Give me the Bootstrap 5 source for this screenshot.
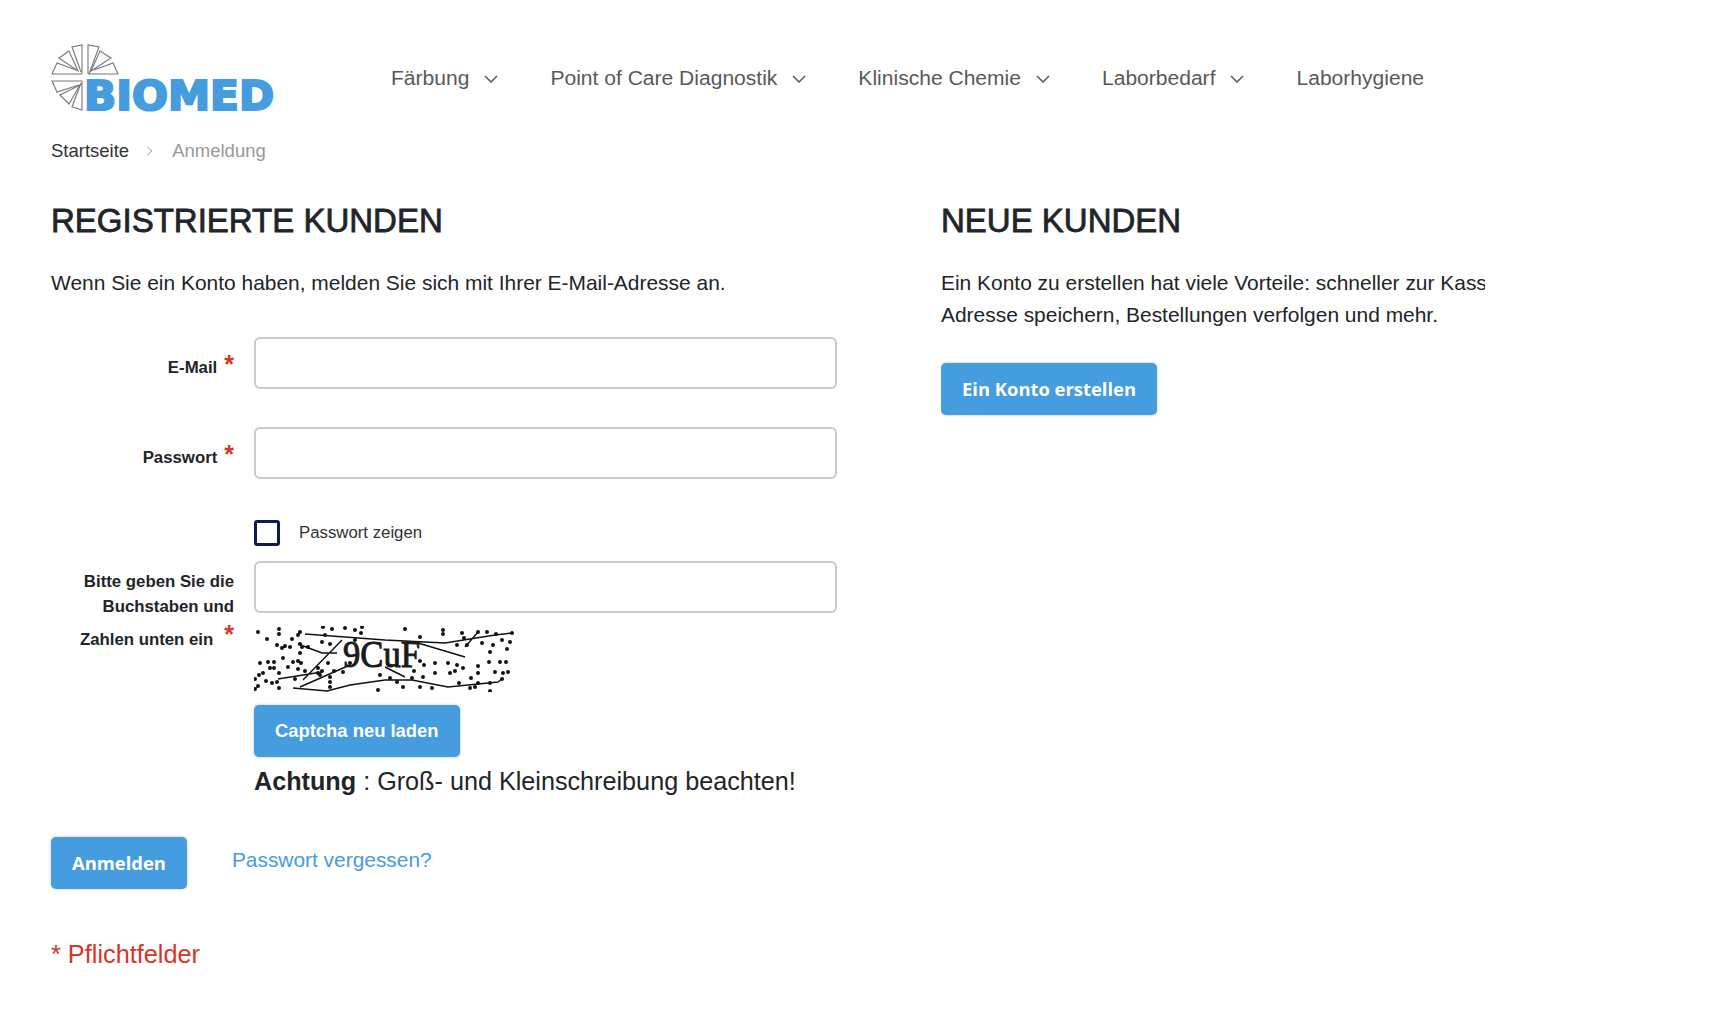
<!DOCTYPE html>
<html lang="de">
<head>
<meta charset="utf-8">
<title>Anmeldung</title>
<link href="https://cdn.jsdelivr.net/npm/bootstrap@5.3.0/dist/css/bootstrap.min.css" rel="stylesheet">
<style>
html,body{overflow:hidden;height:1014px}
body{font-family:"Liberation Sans",Arial,sans-serif;color:#212529;background:#fff}
.page-wrap{padding:44px 0 0 51px;width:1722px}
.logo-link{display:block;height:68px;width:226px;flex:none}
.logo-svg{display:block;width:226px;height:78px}
.main-nav{margin-left:114px;gap:52px;font-size:21.05px;color:#595959;height:68px;padding-top:0}
.main-nav a{color:#595959;text-decoration:none;display:flex;align-items:center;gap:15px}
.main-nav svg{width:14px;height:8px;display:block;margin-top:2px}
.crumbs{margin:0;padding:0;font-size:18.5px;line-height:24px;margin-top:27px;--bs-breadcrumb-item-padding-x:0}
.crumbs .breadcrumb-item a{color:#333;text-decoration:none}
.crumbs .breadcrumb-item+.breadcrumb-item::before{content:none}
.crumbs .breadcrumb-item.active{color:#999}
.crumb-sep{width:8px;height:10px;margin:0 18px 0 17px;align-self:center}
.cols{margin-top:38px}
.col-left{width:890px;flex:none}
.col-right{width:544px;flex:none;overflow:hidden}
.ttl{font-family:"Liberation Sans",Arial,sans-serif;font-size:33px;line-height:40px;font-weight:400;margin:0 0 26px;color:#212529;-webkit-text-stroke:.8px #212529}
.intro{font-size:20.95px;line-height:32px;margin:0 0 38px;white-space:nowrap}
.frow{display:flex;width:785px}
.flabel{width:183px;flex:none;text-align:right;font-weight:700;font-size:16.8px;line-height:25px;padding-top:17px;color:#212529}
.req{color:#d8352a;font-size:25px;font-weight:700;line-height:20px;margin-left:7px;position:relative;top:0}
.req-wide{margin-left:11px;top:-2px}
.fbody{margin-left:20px;width:583px;flex:none}
.fbody .form-control{height:52px;border:2px solid #c9c9c9;border-radius:6px}
.mb-gap{margin-bottom:38px}
.show-row{display:flex;align-items:center;margin:41px 0 15px;padding:0;min-height:0}
.show-row .form-check-input{float:none;margin:0;width:26px;height:26px;border:3px solid #0c1a5c;border-radius:3px}
.show-row .form-check-label{margin-left:19px;font-size:16.8px;color:#333}
.captcha-svg{display:block;width:262px;height:66px;margin-top:13px}
.btn-blue{background:#459cdf;border:0;color:#fff;font-weight:700;height:52px;border-radius:5px;box-shadow:0 0 3px rgba(0,0,0,.25);padding:0 21px;font-size:18.4px;display:inline-flex;align-items:center}
.btn-blue:hover{background:#3a8fd0;color:#fff}
.btn-open{font-family:"Open Sans",sans-serif}
.captcha-btn{margin-top:13px}
.note{font-size:25.2px;line-height:30px;margin-top:9px;white-space:nowrap}
.actions{margin-top:41px}
.link-forgot{color:#459cdf;font-size:20.9px;text-decoration:none;margin-left:45px;position:relative;top:-3px}
.must{color:#d8352a;font-size:25.3px;line-height:30px;margin-top:50px}
.intro-right{margin-bottom:32px}
.capt-txt{font-family:"Liberation Serif",serif;stroke:#1a1a1a;stroke-width:1}
</style>
</head>
<body>
<div class="page-wrap">
  <header class="d-flex align-items-center">
    <a href="#" class="logo-link" aria-label="BIOMED">
      <svg class="logo-svg" viewBox="0 0 226 78" xmlns="http://www.w3.org/2000/svg">
        <g fill="none" stroke="#777" stroke-width="1.1" stroke-linejoin="miter">
          <path d="M37 30V1L48 3 38 30H67L62 19 43 26"/>
          <path d="M49 7 60 14 40 27Z"/>
          <path d="M31 30V1L21 3 30 28"/>
          <path d="M18 7 8 14 27 27Z"/>
          <path d="M31 30H1L6 19 25 26"/>
          <path d="M31 37H1L6 48 28 41"/>
          <path d="M9 51 18 60 29 41Z"/>
          <path d="M31 37V66L21 63 30 39"/>
        </g>
        <text x="33" y="66" font-family="DejaVu Sans" font-weight="700" font-size="40.5" fill="#459cdf" stroke="#459cdf" stroke-width="2.2" textLength="190" lengthAdjust="spacingAndGlyphs">BIOMED</text>
      </svg>
    </a>
    <nav class="main-nav d-flex align-items-center">
      <a href="#">Färbung <svg viewBox="0 0 14 8"><path d="M1 1l6 6 6-6" fill="none" stroke="#595959" stroke-width="1.5"/></svg></a>
      <a href="#">Point of Care Diagnostik <svg viewBox="0 0 14 8"><path d="M1 1l6 6 6-6" fill="none" stroke="#595959" stroke-width="1.5"/></svg></a>
      <a href="#">Klinische Chemie <svg viewBox="0 0 14 8"><path d="M1 1l6 6 6-6" fill="none" stroke="#595959" stroke-width="1.5"/></svg></a>
      <a href="#">Laborbedarf <svg viewBox="0 0 14 8"><path d="M1 1l6 6 6-6" fill="none" stroke="#595959" stroke-width="1.5"/></svg></a>
      <a href="#">Laborhygiene</a>
    </nav>
  </header>

  <nav aria-label="breadcrumb">
    <ol class="breadcrumb crumbs">
      <li class="breadcrumb-item"><a href="#">Startseite</a></li>
      <svg class="crumb-sep" viewBox="0 0 8 10"><path d="M1.5 1l4.5 4-4.5 4" fill="none" stroke="#999" stroke-width="1"/></svg>
      <li class="breadcrumb-item active" aria-current="page">Anmeldung</li>
    </ol>
  </nav>

  <div class="d-flex cols">
    <section class="col-left">
      <h2 class="ttl">REGISTRIERTE KUNDEN</h2>
      <p class="intro">Wenn Sie ein Konto haben, melden Sie sich mit Ihrer E-Mail-Adresse an.</p>
      <form>
        <div class="frow mb-gap">
          <label class="flabel" for="em">E-Mail<span class="req">*</span></label>
          <div class="fbody"><input id="em" type="email" class="form-control"></div>
        </div>
        <div class="frow">
          <label class="flabel" for="pw">Passwort<span class="req">*</span></label>
          <div class="fbody"><input id="pw" type="password" class="form-control"></div>
        </div>
        <div class="frow">
          <div class="flabel"></div>
          <div class="fbody">
            <div class="form-check show-row">
              <input class="form-check-input" type="checkbox" id="sp">
              <label class="form-check-label" for="sp">Passwort zeigen</label>
            </div>
          </div>
        </div>
        <div class="frow">
          <label class="flabel pt-2" for="cp">Bitte geben Sie die<br>Buchstaben und<br><span class="d-inline-block capt-gap mt-2">Zahlen unten ein</span><span class="req req-wide">*</span></label>
          <div class="fbody">
            <input id="cp" type="text" class="form-control">
            <svg class="captcha-svg" viewBox="0 0 262 66" xmlns="http://www.w3.org/2000/svg" role="img" aria-label="Captcha">
              <path fill="none" stroke="#111" stroke-width="4" stroke-linecap="round" d="M4 6h0M25 3h0M25 8h0M13 13h0M38 13h0M46 6h0M44 9h0M23 19h0M28 22h0M31 20h0M36 21h0M46 18h0M48 21h0M54 21h0M46 27h0M29 32h0M6 37h0M14 36h0M20 36h0M16 42h0M20 42h0M25 47h0M9 47h0M5 49h0M1 53h0M12 55h0M18 57h0M23 56h0M4 60h0M1 63h0M25 62h0M34 41h0M39 36h0M44 35h0M47 37h0M44 43h0M51 45h0M64 42h0M68 45h0M74 37h0M64 47h0M80 45h0M89 46h0M96 37h0M41 53h0M76 51h0M76 56h0M76 61h0M66 49h0M69 1h0M78 3h0M91 2h0M101 4h0M107 7h0M108 1h0M71 9h0M68 16h0M76 18h0M101 14h0M126 49h0M124 64h0M151 3h0M189 4h0M189 8h0M166 11h0M208 7h0M224 6h0M233 6h0M242 8h0M258 7h0M210 12h0M228 17h0M239 19h0M256 16h0M248 14h0M213 19h0M203 19h0M236 26h0M253 23h0M194 37h0M166 35h0M170 39h0M181 37h0M160 45h0M181 47h0M169 51h0M203 39h0M196 47h0M201 45h0M209 42h0M224 40h0M235 36h0M246 36h0M252 36h0M241 46h0M224 47h0M249 47h0M254 46h0M217 52h0M205 57h0M224 57h0M236 57h0M248 53h0M216 62h0M221 61h0M236 65h0M178 62h0M149 61h0M166 61h0M158 52h0M143 56h0M136 52h0"/>
              <path fill="none" stroke="#111" stroke-width="1.4" d="M51 8 131 14 191 17 241 9 258 7M39 62 73 65 96 59 131 54 158 54 194 61 244 56 249 52M46 61 96 39M24 53 68 46M49 54 88 14M44 18 68 27 83 27M164 17 211 31M131 41 151 51M211 21 224 6"/>
              <text x="89" y="41" class="capt-txt" font-size="38" fill="#1a1a1a" textLength="77" lengthAdjust="spacingAndGlyphs">9CuF</text>
            </svg>
            <button type="button" class="btn btn-blue captcha-btn">Captcha neu laden</button>
            <div class="note"><strong>Achtung</strong> : Groß- und Kleinschreibung beachten!</div>
          </div>
        </div>
        <div class="d-flex align-items-center actions">
          <button type="submit" class="btn btn-blue btn-open">Anmelden</button>
          <a href="#" class="link-forgot">Passwort vergessen?</a>
        </div>
        <div class="must">* Pflichtfelder</div>
      </form>
    </section>
    <section class="col-right">
      <h2 class="ttl">NEUE KUNDEN</h2>
      <p class="intro intro-right">Ein Konto zu erstellen hat viele Vorteile: schneller zur Kasse gehen,<br>Adresse speichern, Bestellungen verfolgen und mehr.</p>
      <a href="#" class="btn btn-blue btn-open">Ein Konto erstellen</a>
    </section>
  </div>
</div>
<script src="https://cdn.jsdelivr.net/npm/bootstrap@5.3.0/dist/js/bootstrap.bundle.min.js"></script>
</body>
</html>
